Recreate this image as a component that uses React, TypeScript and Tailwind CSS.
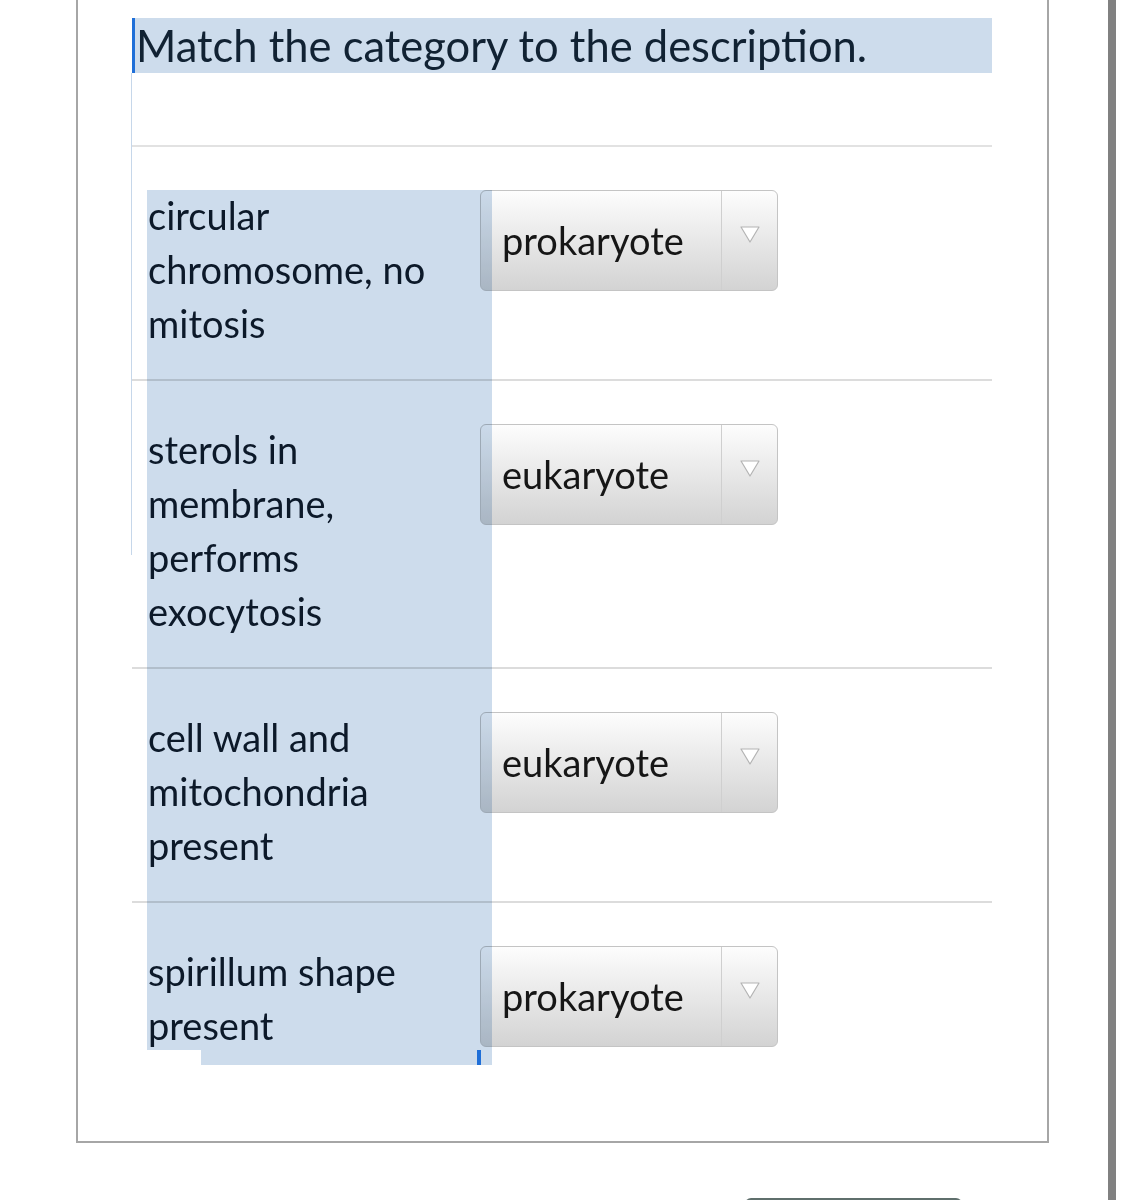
import React from "react";

type Row = { text: string; answer: string };

const rows: Row[] = [
  { text: "circular chromosome, no mitosis", answer: "prokaryote" },
  { text: "sterols in membrane, performs exocytosis", answer: "eukaryote" },
  { text: "cell wall and mitochondria present", answer: "eukaryote" },
  { text: "spirillum shape present", answer: "prokaryote" },
];

const Dropdown = ({ value }: { value: string }) => (
  <div className="mt-[2px] flex h-[101px] w-[298px] shrink-0 rounded-[6px] border border-[#c4c4c4] bg-gradient-to-b from-[#fdfdfd] to-[#d3d3d3] overflow-hidden">
    <div className="flex flex-1 items-center pl-[21px] text-[38px] text-[#161616]">
      {value}
    </div>
    <div className="flex w-[56px] items-start justify-center border-l border-[#cfcfcf] pt-[34px]">
      <svg width="22" height="19" viewBox="0 0 22 19">
        <path
          d="M2 2 L20 2 L11 17 Z"
          fill="#ffffff"
          stroke="#b4b4b4"
          strokeWidth="1.2"
          strokeLinejoin="round"
        />
      </svg>
    </div>
  </div>
);

export default function App() {
  return (
    <div
      className="flex min-h-[1200px] w-[1126px] bg-white overflow-hidden"
      style={{ fontFamily: "Lato, 'Open Sans', sans-serif" }}
    >
      <div className="ml-[76px] flex w-[973px] flex-col">
        <div className="relative border-x-2 border-b-2 border-[#a6a6a6] px-[54px] pt-[18px] pb-[60px]">
          {/* heading */}
          <div className="flex h-[55px] w-[860px] items-center border-l-[3px] border-[#1f6fd8] bg-[#cddcec] pl-[1px] text-[43.5px] text-[#112233]">
            Match the category to the description.
          </div>
          <div className="mt-[72px] h-[2px] w-[860px] bg-[#e2e2e2]" />

          {rows.map((row, idx) => (
            <div key={idx}>
              <div className="flex items-start pl-[16px] pt-[41px] pb-[29px]">
                <div className="w-[332px] shrink-0 pr-[12px] text-[38px] leading-[54px] text-[#0e1c2c]">
                  {row.text}
                </div>
                <Dropdown value={row.answer} />
              </div>
              {idx < rows.length - 1 && (
                <div className="h-[2px] w-[860px] bg-[#dcdcdc]" />
              )}
            </div>
          ))}

          {/* text selection overlay */}
          <div className="pointer-events-none absolute left-[53px] top-[73px] h-[482px] w-[1px] bg-[#c6d7ea]" />
          <div className="pointer-events-none absolute left-[69px] top-[190px] h-[860px] w-[345px] bg-[#cddcec] mix-blend-multiply" />
          <div className="pointer-events-none absolute left-[123px] top-[1050px] h-[15px] w-[291px] bg-[#cddcec] mix-blend-multiply" />
          <div className="pointer-events-none absolute left-[399px] top-[1050px] h-[15px] w-[4px] bg-[#1f6fd8]" />
        </div>
        <div className="mt-[55px] ml-[669px] h-[50px] w-[217px] shrink-0 rounded-[6px] bg-[#5f6f6c]" />
      </div>
      <div className="ml-[59px] w-[8px] min-h-[1200px] bg-[#818181]" />
    </div>
  );
}
